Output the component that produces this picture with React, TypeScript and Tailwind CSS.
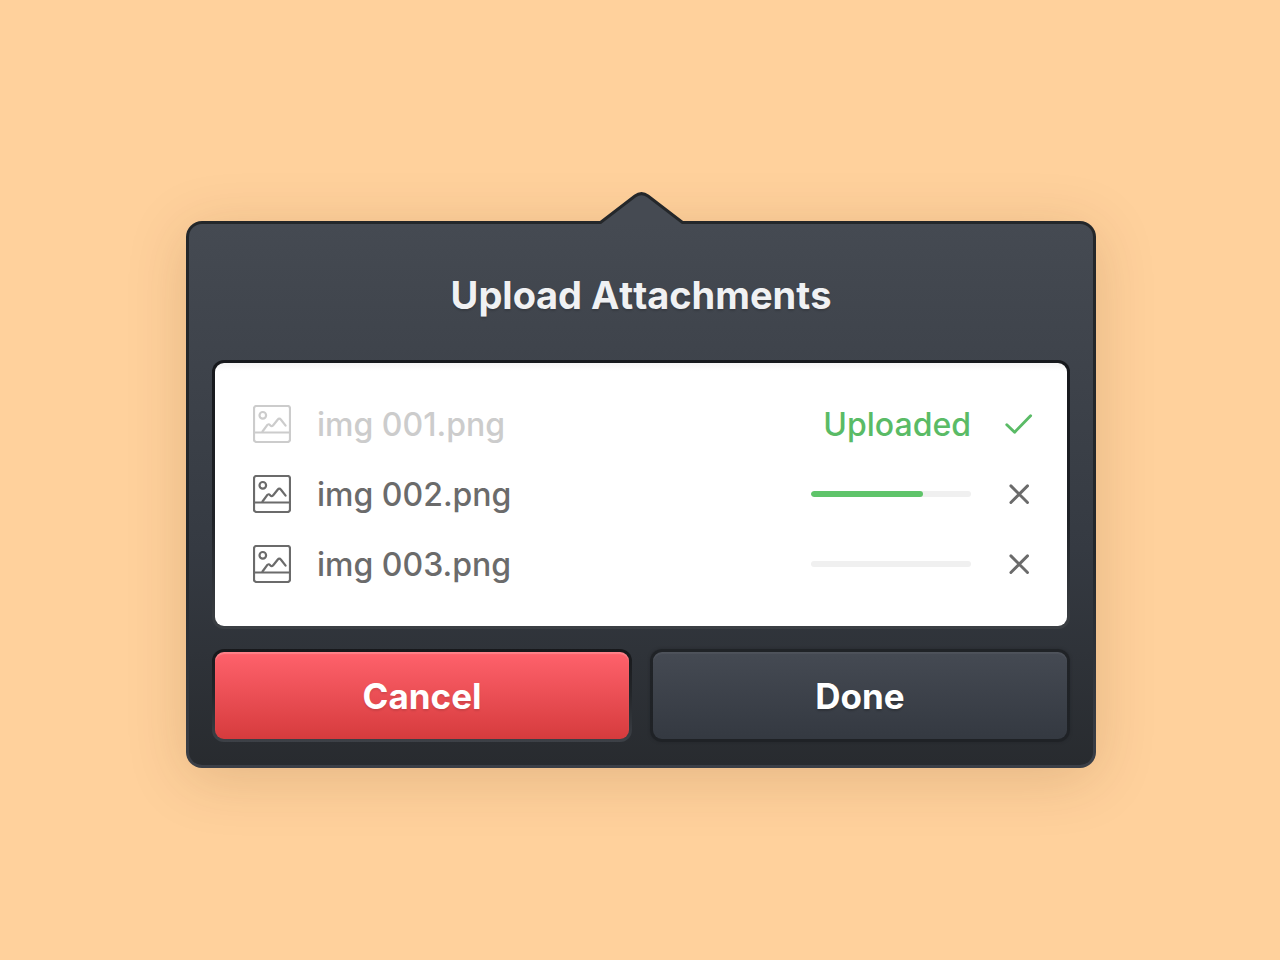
import React, { useState } from "react";

type Attachment = {
  name: string;
  progress: number;
};

const initialFiles: Attachment[] = [
  { name: "img 001.png", progress: 100 },
  { name: "img 002.png", progress: 70 },
  { name: "img 003.png", progress: 0 },
];

const ImageIcon: React.FC = () => (
  <svg
    viewBox="0 0 38 38"
    className="w-[38px] h-[38px] shrink-0"
    fill="none"
    stroke="currentColor"
    strokeWidth="2.2"
    strokeLinecap="round"
    strokeLinejoin="round"
    aria-hidden="true"
  >
    <rect x="1" y="1" width="36" height="36" rx="2.5" />
    <path d="M1 27.5h36" />
    <circle cx="9.8" cy="10.3" r="3.3" />
    <path d="M9.5 26.5L14 20.3Q15.6 18.3 17.2 20.2Q18.9 22 20.4 20L24.6 14.7Q26.3 12.6 28 14.7L32.6 20.6" />
  </svg>
);

const CheckIcon: React.FC = () => (
  <svg
    viewBox="0 0 28 28"
    className="w-7 h-7 text-[#5abb66]"
    fill="none"
    stroke="currentColor"
    strokeWidth="2.9"
    strokeLinecap="round"
    strokeLinejoin="round"
    aria-hidden="true"
  >
    <path d="M1.8 14.8L9.6 22.2L25.6 5.8" />
  </svg>
);

const CloseIcon: React.FC = () => (
  <svg
    viewBox="0 0 28 28"
    className="w-7 h-7"
    fill="none"
    stroke="currentColor"
    strokeWidth="2.9"
    strokeLinecap="round"
    aria-hidden="true"
  >
    <path d="M5.9 5.9l16.6 16.6M22.5 5.9l-16.6 16.6" />
  </svg>
);

const buttonClass =
  "flex-1 h-[93px] pt-0.5 rounded-xl border-3 border-transparent text-[35px] font-bold text-white";

const App: React.FC = () => {
  const [files, setFiles] = useState<Attachment[]>(initialFiles);

  const handleRemove = (name: string) => {
    setFiles(files.filter((file) => file.name !== name));
  };

  return (
    <main className="min-h-screen flex flex-col items-center justify-center pl-0.5 pb-px bg-[#ffd19c] font-['Inter',sans-serif]">
      {/* Pointer on top of the popover, covers the card's border */}
      <svg
        viewBox="0 0 86 32"
        className="relative z-10 w-[86px] h-8 -mb-[3px]"
        aria-hidden="true"
      >
        <path
          d="M0 32V30.5H2.5L37 4Q43.5 -0.8 50 4L84.5 30.5H86V32Z"
          fill="#454a52"
        />
        <path
          d="M0 30.5H2.5L37 4Q43.5 -0.8 50 4L84.5 30.5H86"
          fill="none"
          stroke="#24272a"
          strokeWidth="3"
        />
      </svg>

      <section className="w-full max-w-[910px] p-[23px] pt-0 rounded-2xl border-3 border-transparent [background:linear-gradient(#454a52,#353a42_60%,#282b2f)_padding-box,linear-gradient(#24272a,#23272c_60%,#3b3f47)_border-box] shadow-[0_10px_60px_rgba(90,50,10,0.17)]">
        <h1 className="h-[136px] pt-2 flex items-center justify-center text-[38px] font-bold text-[#f0f1f3] [font-kerning:none] text-shadow-[0_2px_2px_rgba(0,0,0,0.15)]">
          Upload Attachments
        </h1>

        <ul className="space-y-8 pt-[42px] pb-[43px] pl-[38px] pr-[34px] rounded-xl border-3 border-transparent [background:linear-gradient(#f4f4f4,#ffffff_8px)_padding-box,linear-gradient(#16181c,#1f2227_60%,#3b3f44)_border-box]">
          {files.map((file) => {
            const done = file.progress === 100;
            return (
              <li
                key={file.name}
                className="h-[38px] flex items-center text-[32px] font-medium text-[#6b6b6b]"
              >
                <div
                  className={
                    done
                      ? "flex flex-1 items-center gap-[26px] text-[#cccccc]"
                      : "flex flex-1 items-center gap-[26px]"
                  }
                >
                  <ImageIcon />
                  <span className="pt-0.5">{file.name}</span>
                </div>
                {done ? (
                  <span className="pt-0.5 text-[#5abb66]">Uploaded</span>
                ) : (
                  <div
                    role="progressbar"
                    aria-label={file.name}
                    aria-valuenow={file.progress}
                    className="w-40 h-1.5 rounded-full bg-[#f0f0f0] overflow-hidden"
                  >
                    <div
                      className="h-full rounded-full bg-[#5fc46a]"
                      style={{ width: `${file.progress}%` }}
                    />
                  </div>
                )}
                <div className="ml-[34px] w-7 h-7">
                  {done ? (
                    <CheckIcon />
                  ) : (
                    <button
                      type="button"
                      aria-label={`Remove ${file.name}`}
                      className="block"
                      onClick={() => handleRemove(file.name)}
                    >
                      <CloseIcon />
                    </button>
                  )}
                </div>
              </li>
            );
          })}
        </ul>

        <div className="mt-5 flex gap-[18px]">
          <button
            type="button"
            onClick={() => setFiles([])}
            className={`${buttonClass} [background:linear-gradient(#ff626c,#d63b3d)_padding-box,linear-gradient(#17181b,#24272b_50%,#3d4147)_border-box] inset-shadow-[0_2px_1px_rgba(255,255,255,0.2)] text-shadow-[0_2px_2px_rgba(0,0,0,0.1)]`}
          >
            Cancel
          </button>
          <button
            type="button"
            className={`${buttonClass} [background:linear-gradient(#454a53,#343941)_padding-box,linear-gradient(#202327,#1f2226)_border-box] inset-shadow-[0_2px_1px_rgba(255,255,255,0.05)] shadow-[0_0_3px_rgba(31,34,38,0.6)] text-shadow-[0_2px_2px_rgba(0,0,0,0.2)]`}
          >
            Done
          </button>
        </div>
      </section>
    </main>
  );
};

export default App;
